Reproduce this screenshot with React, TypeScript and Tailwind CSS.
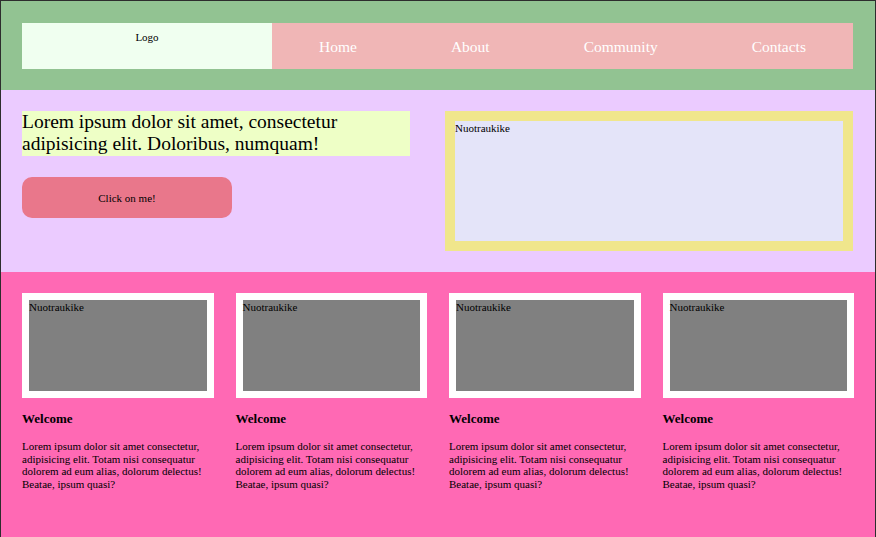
const serif = "font-['Liberation_Serif','Times_New_Roman',serif]";

const navLinks = ["Home", "About", "Community", "Contacts"];

const cardText =
  "Lorem ipsum dolor sit amet consectetur, adipisicing elit. Totam nisi consequatur dolorem ad eum alias, dolorum delectus! Beatae, ipsum quasi?";

function Card() {
  return (
    <div>
      <div className="bg-white p-[7px]">
        <div className="h-[91px] bg-[#808080] pt-[1px] text-[11px] leading-[1.15] text-black">Nuotraukike</div>
      </div>
      <h3 className="mt-[14px] text-[13px] font-bold leading-[1.15] text-black">Welcome</h3>
      <p className="mt-[13px] text-[11px] leading-[1.16] text-black">{cardText}</p>
    </div>
  );
}

export default function App() {
  return (
    <div className={`${serif} w-[876px] min-h-[560px] border border-[#2d2d2d] bg-[#ff69b4]`}>
      {/* header */}
      <header className="bg-[#92c392] pl-[21px] pr-[22px] pt-[22px] pb-[21px]">
        <div className="flex h-[46px]">
          <div className="w-[250px] bg-[#f0fff0] pt-[8px] text-center text-[11px] leading-[1.15] text-black">
            Logo
          </div>
          <nav className="flex flex-1 items-center justify-around bg-[#f0b6b6] pt-[2px]">
            {navLinks.map((l) => (
              <a key={l} className="text-[15.5px] leading-[1.15] text-white">
                {l}
              </a>
            ))}
          </nav>
        </div>
      </header>

      {/* hero */}
      <section className="flex items-start justify-between bg-[#ebcbff] pl-[21px] pr-[22px] py-[21px]">
        <div className="w-[388px]">
          <p className="bg-[#eeffc6] text-[19.5px] leading-[1.15] text-black">
            Lorem ipsum dolor sit amet, consectetur adipisicing elit. Doloribus, numquam!
          </p>
          <button className="mt-[21px] h-[41px] w-[210px] rounded-[10px] bg-[#e9778b] pt-[2px] text-[11px] text-black">
            Click on me!
          </button>
        </div>
        <div className="h-[140px] w-[408px] border-[10px] border-[#f0e68c] bg-[#e4e4f9] pt-[1px] text-[11px] leading-[1.15] text-black">
          Nuotraukike
        </div>
      </section>

      {/* cards */}
      <section className="grid grid-cols-4 gap-x-[22px] px-[21px] pt-[21px] pb-[60px]">
        <Card />
        <Card />
        <Card />
        <Card />
      </section>
    </div>
  );
}
